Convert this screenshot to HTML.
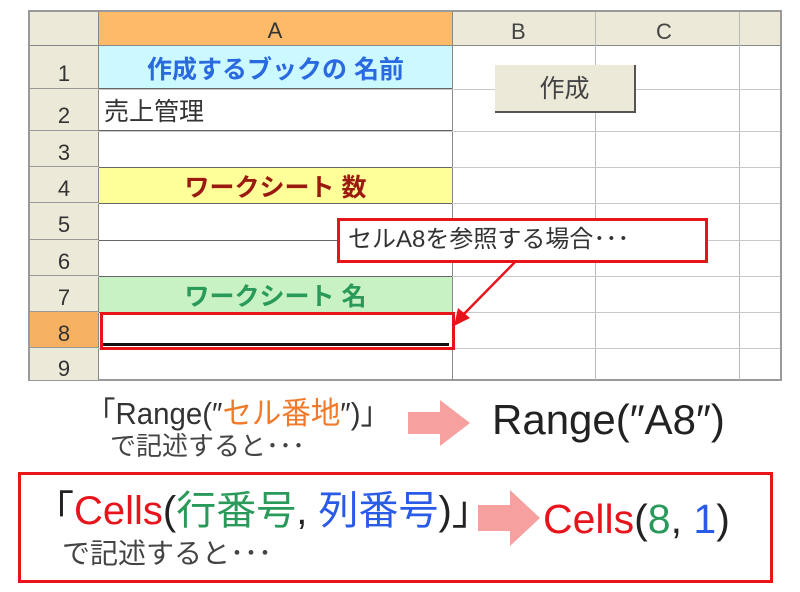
<!DOCTYPE html>
<html><head><meta charset="utf-8"><style>
body{margin:0;width:800px;height:592px;background:#fff;position:relative;overflow:hidden;font-family:"Liberation Sans","Noto Sans CJK JP",sans-serif;}
.a{position:absolute;box-sizing:border-box;}
.hl{position:absolute;height:1px;background:#c8c8c8;}
.vl{position:absolute;width:1px;background:#c8c8c8;}
.rh{position:absolute;left:30px;width:68px;background:#ece9d8;border-bottom:1px solid #999;color:#333;font-size:22px;text-align:center;box-sizing:border-box;}
.t{position:absolute;white-space:nowrap;}
</style></head><body>
<div class="a" style="left:28px;top:10px;width:754px;height:371px;border:2px solid #9a9a9a;background:#fff"></div>
<div class="a" style="left:30px;top:12px;width:750px;height:34px;background:#ece9d8;border-bottom:1px solid #888"></div>
<div class="a" style="left:98px;top:12px;width:354px;height:34px;background:#fdbb6a;border-bottom:1px solid #888;text-align:center;font-size:22px;line-height:38px;color:#333">A</div>
<div class="t" style="left:511px;top:19px;font-size:22px;color:#444">B</div>
<div class="t" style="left:656px;top:19px;font-size:22px;color:#444">C</div>
<div class="vl" style="left:98px;top:12px;height:368px;background:#888"></div>
<div class="vl" style="left:452px;top:12px;height:368px;background:#888"></div>
<div class="vl" style="left:595px;top:12px;height:368px;background:#bbb"></div>
<div class="vl" style="left:739px;top:12px;height:368px;background:#bbb"></div>
<div class="hl" style="left:98px;top:89px;width:682px"></div>
<div class="hl" style="left:98px;top:131px;width:682px"></div>
<div class="hl" style="left:98px;top:167px;width:682px"></div>
<div class="hl" style="left:98px;top:203px;width:682px"></div>
<div class="hl" style="left:98px;top:240px;width:682px"></div>
<div class="hl" style="left:98px;top:276px;width:682px"></div>
<div class="hl" style="left:98px;top:312px;width:682px"></div>
<div class="hl" style="left:98px;top:348px;width:682px"></div>
<div class="rh" style="top:46px;height:43px;line-height:56px">1</div>
<div class="rh" style="top:89px;height:42px;line-height:54px">2</div>
<div class="rh" style="top:131px;height:36px;line-height:44px">3</div>
<div class="rh" style="top:167px;height:36px;line-height:44px">4</div>
<div class="rh" style="top:203px;height:37px;line-height:44px">5</div>
<div class="rh" style="top:240px;height:36px;line-height:44px">6</div>
<div class="rh" style="top:276px;height:36px;line-height:44px">7</div>
<div class="rh" style="top:312px;height:36px;line-height:44px;background:#f7b162">8</div>
<div class="rh" style="top:348px;height:32px;line-height:42px;border:0">9</div>
<div class="a" style="left:99px;top:46px;width:353px;height:43px;background:#ccf8ff;border-bottom:1px solid #666;color:#2a6ae0;font-size:25px;font-weight:600;text-align:center;line-height:48px">作成するブックの 名前</div>
<div class="a" style="left:99px;top:89px;width:353px;height:42px;border-bottom:1px solid #666;font-size:25px;line-height:46px;padding-left:5px;color:#333">売上管理</div>
<div class="a" style="left:99px;top:167px;width:353px;height:37px;background:#ffff99;border-top:1px solid #666;border-bottom:1px solid #666;color:#9a1a10;font-size:25px;font-weight:600;text-align:center;line-height:40px">ワークシート 数</div>
<div class="a" style="left:99px;top:240px;width:353px;height:1px;background:#666"></div>
<div class="a" style="left:99px;top:276px;width:353px;height:37px;background:#c8f2c4;border-top:1px solid #666;border-bottom:1px solid #666;color:#2a9a5a;font-size:25px;font-weight:600;text-align:center;line-height:40px">ワークシート 名</div>
<div class="a" style="left:100px;top:312px;width:355px;height:38px;border:3px solid #e8141c;"></div>
<div class="a" style="left:103px;top:343px;width:346px;height:3px;background:#111"></div>
<div class="a" style="left:495px;top:65px;width:141px;height:48px;background:#ece9d8;border-right:2px solid #555;border-bottom:2px solid #555;font-size:25px;color:#444;text-align:center;line-height:48px">作成</div>
<div class="a" style="left:337px;top:218px;width:371px;height:45px;background:#fff;border:3px solid #e8141c;font-size:24px;color:#333;line-height:38px;padding-left:8px">セルA8を参照する場合･･･</div>
<svg class="a" style="left:440px;top:260px" width="90" height="70"><line x1="75" y1="2" x2="22" y2="56" stroke="#e8141c" stroke-width="2.5"/><polygon points="14,66 18,48 30,58" fill="#e8141c"/></svg>
<div class="t" style="left:86px;top:388px;font-size:31px;color:#333;transform:scaleX(0.95);transform-origin:left">「Range(″<span style="color:#f07a2a">セル番地</span>″)」</div>
<div class="t" style="left:110px;top:426px;font-size:26px;color:#444">で記述すると･･･</div>
<svg class="a" style="left:408px;top:400px" width="64" height="46"><polygon points="0,12 32,12 32,0 62,23 32,46 32,34 0,34" fill="#f7a0a0"/></svg>
<div class="t" style="left:492px;top:396px;font-size:42px;color:#222">Range(″A8″)</div>
<div class="a" style="left:18px;top:472px;width:755px;height:111px;border:3px solid #e8141c"></div>
<div class="t" style="left:34px;top:478px;font-size:40px;color:#222">「<span style="color:#e8141c">Cells</span>(<span style="color:#2a9a5a">行番号</span>, <span style="color:#2a5ae8">列番号</span>)」</div>
<div class="t" style="left:62px;top:532px;font-size:28px;color:#444">で記述すると･･･</div>
<svg class="a" style="left:478px;top:490px" width="64" height="56"><polygon points="0,15 32,15 32,0 62,28 32,56 32,41 0,41" fill="#f7a0a0"/></svg>
<div class="t" style="left:543px;top:496px;font-size:41px;color:#222"><span style="color:#e8141c">Cells</span>(<span style="color:#2a9a5a">8</span>, <span style="color:#2a5ae8">1</span>)</div>
</body></html>
